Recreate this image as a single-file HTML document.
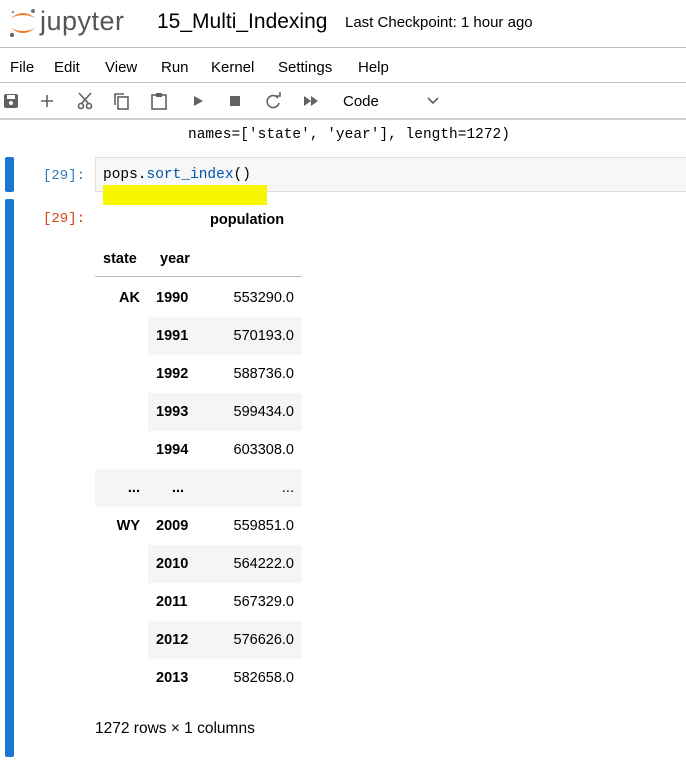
<!DOCTYPE html>
<html><head><style>
*{margin:0;padding:0;box-sizing:border-box}
body{width:686px;height:767px;overflow:hidden;background:#fff;font-family:"Liberation Sans",sans-serif;color:#000;position:relative}
.a{position:absolute}
.mono{font-family:"Liberation Mono",monospace;font-size:14px}
td,th{height:38px;font-size:14.5px;padding:0 8px}
table{border-collapse:collapse;position:absolute;left:95px;top:279px;width:207px}
</style></head><body>
<svg class="a" style="left:8px;top:6px" width="30" height="34" viewBox="0 0 30 34">
<path d="M3 12 Q15 2 27 12 Q15 6 3 12Z" fill="#f37726"/>
<path d="M3 22 Q15 32 27 22 Q15 28 3 22Z" fill="#f37726"/>
<circle cx="25" cy="5" r="2" fill="#767677"/><circle cx="4" cy="29" r="2" fill="#616262"/><circle cx="5" cy="6" r="1.3" fill="#989798"/>
</svg>
<div class="a" style="left:40px;top:6px;font-size:27px;color:#555;letter-spacing:0.5px">jupyter</div>
<div class="a" style="left:157px;top:10px;font-size:21px">15_Multi_Indexing</div>
<div class="a" style="left:345px;top:14px;font-size:15px">Last Checkpoint: 1 hour ago</div>
<div class="a" style="left:0;top:47px;width:686px;border-top:1px solid #bdbdbd"></div>
<div class="a" style="left:10px;top:59px;font-size:15px">File</div>
<div class="a" style="left:54px;top:59px;font-size:15px">Edit</div>
<div class="a" style="left:105px;top:59px;font-size:15px">View</div>
<div class="a" style="left:161px;top:59px;font-size:15px">Run</div>
<div class="a" style="left:211px;top:59px;font-size:15px">Kernel</div>
<div class="a" style="left:278px;top:59px;font-size:15px">Settings</div>
<div class="a" style="left:358px;top:59px;font-size:15px">Help</div>
<div class="a" style="left:0;top:82px;width:686px;border-top:1px solid #bdbdbd"></div>
<svg class="a" style="left:0;top:88px" width="450" height="26" viewBox="0 0 450 26" fill="#616161" stroke="#616161">
<rect x="4" y="6" width="14" height="14" rx="2" stroke="none"/><rect x="7" y="7" width="8" height="4" fill="#fff" stroke="none"/><circle cx="11" cy="15" r="2" fill="#fff" stroke="none"/>
<path d="M47 7v12M41 13h12" stroke-width="1.6" fill="none"/>
<circle cx="81" cy="18" r="2.5" fill="none" stroke-width="1.6"/><circle cx="89" cy="18" r="2.5" fill="none" stroke-width="1.6"/><path d="M79 5l10 11M91 5l-10 11" stroke-width="1.6" fill="none"/>
<rect x="118" y="9" width="10" height="12" fill="none" stroke-width="1.6"/><path d="M115 17V6h9" fill="none" stroke-width="1.6"/>
<rect x="152" y="7" width="14" height="14" fill="none" stroke-width="1.6"/><rect x="156" y="5" width="6" height="4" stroke="none"/>
<path d="M194 8l9 5-9 5z" stroke="none"/>
<rect x="230" y="8" width="10" height="10" stroke="none"/>
<path d="M278 10a6 6 0 1 0 1 5" fill="none" stroke-width="1.6"/><path d="M275 8h5v-4" fill="none" stroke-width="1.6"/>
<path d="M304 8l7 5-7 5zM311 8l7 5-7 5z" stroke="none"/>
<path d="M428 10l5 5 5-5" fill="none" stroke-width="1.6"/>
</svg>
<div class="a" style="left:343px;top:93px;font-size:15px">Code</div>
<div class="a" style="left:0;top:118px;width:686px;height:2px;background:#d0d0d0"></div>
<div class="a mono" style="left:188px;top:127px;color:#000;font-size:14.5px">names=['state', 'year'], length=1272)</div>
<div class="a" style="left:5px;top:157px;width:9px;height:35px;background:#1976d2;border-radius:2px"></div>
<div class="a mono" style="left:43px;top:168px;color:#307fc1">[29]:</div>
<div class="a" style="left:95px;top:157px;width:600px;height:35px;background:#f7f7f7;border:1px solid #e0e0e0"></div>
<div class="a mono" style="left:103px;top:167px;font-size:14.5px"><span>pops.</span><span style="color:#0055aa">sort_index</span>()</div>
<div class="a" style="left:103px;top:185px;width:164px;height:20px;background:#f7f700"></div>
<div class="a" style="left:5px;top:199px;width:9px;height:558px;background:#1976d2;border-radius:2px"></div>
<div class="a mono" style="left:43px;top:211px;color:#d84315">[29]:</div>
<div class="a" style="left:210px;top:212px;font-size:14.5px;font-weight:bold">population</div>
<div class="a" style="left:103px;top:251px;font-size:14.5px;font-weight:bold">state</div>
<div class="a" style="left:160px;top:251px;font-size:14.5px;font-weight:bold">year</div>
<div class="a" style="left:95px;top:276px;width:207px;border-top:1px solid #bdbdbd"></div>
<table>
<col style="width:53px"><col style="width:62px"><col>
<tr><th style="text-align:right">AK</th><th style="text-align:left">1990</th><td style="text-align:right">553290.0</td></tr>
<tr><th></th><th style="text-align:left;background:#f5f5f5">1991</th><td style="text-align:right;background:#f5f5f5">570193.0</td></tr>
<tr><th></th><th style="text-align:left">1992</th><td style="text-align:right">588736.0</td></tr>
<tr><th></th><th style="text-align:left;background:#f5f5f5">1993</th><td style="text-align:right;background:#f5f5f5">599434.0</td></tr>
<tr><th></th><th style="text-align:left">1994</th><td style="text-align:right">603308.0</td></tr>
<tr style="background:#f5f5f5"><th style="text-align:right">...</th><th style="text-align:left;padding-left:24px">...</th><td style="text-align:right">...</td></tr>
<tr><th style="text-align:right">WY</th><th style="text-align:left">2009</th><td style="text-align:right">559851.0</td></tr>
<tr><th></th><th style="text-align:left;background:#f5f5f5">2010</th><td style="text-align:right;background:#f5f5f5">564222.0</td></tr>
<tr><th></th><th style="text-align:left">2011</th><td style="text-align:right">567329.0</td></tr>
<tr><th></th><th style="text-align:left;background:#f5f5f5">2012</th><td style="text-align:right;background:#f5f5f5">576626.0</td></tr>
<tr><th></th><th style="text-align:left">2013</th><td style="text-align:right">582658.0</td></tr>
</table>
<div class="a" style="left:95px;top:720px;font-size:15.5px">1272 rows × 1 columns</div>
</body></html>
